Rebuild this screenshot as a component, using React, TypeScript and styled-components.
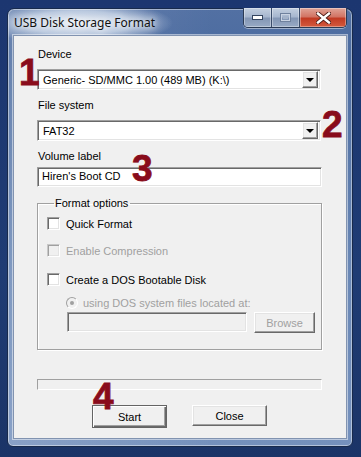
import React from 'react';
import styled, { createGlobalStyle, css } from 'styled-components';

const GlobalStyle = createGlobalStyle`
  html, body {
    margin: 0;
    padding: 0;
    background: #1d3769;
  }
  body {
    width: 361px;
    height: 457px;
    overflow: hidden;
    background: linear-gradient(180deg, #1c3670 0%, #1f3c74 60%, #1b3467 100%);
    font-family: "Liberation Sans", Arial, sans-serif;
  }
`;

const Frame = styled.div`
  position: relative;
  margin: 8px 0 0 7px;
  width: 346px;
  height: 439px;
  box-sizing: border-box;
  border: 1px solid #182a4c;
  border-radius: 7px 7px 6px 6px;
  background:
    radial-gradient(ellipse 95px 22px at 70px 14px, rgba(240, 244, 249, 0.95) 0%, rgba(215, 226, 240, 0.75) 55%, rgba(215, 226, 240, 0) 100%),
    linear-gradient(90deg, rgba(255, 255, 255, 0.15), rgba(255, 255, 255, 0) 60%),
    linear-gradient(180deg, #5270a3 0%, #4c6ca0 10%, #6a88b6 60%, #7591bd 100%);
  box-shadow: inset 0 0 0 1px rgba(255, 255, 255, 0.45);
  display: flex;
  flex-direction: column;
  padding: 0 5px 7px 5px;
`;

const TitleBar = styled.div`
  height: 26px;
  display: flex;
  justify-content: space-between;
  align-items: flex-start;
`;

const Title = styled.span`
  margin: 6px 0 0 1px;
  font-family: "Noto Sans", "Open Sans", sans-serif;
  font-size: 12px;
  line-height: 16px;
  color: #111;
  text-shadow: 0 0 6px #fff, 0 0 10px #fff;
`;

const CaptionGroup = styled.div`
  display: flex;
  margin-top: -1px;
  border: 1px solid #2b3b55;
  border-top: none;
  border-radius: 0 0 5px 5px;
  overflow: hidden;
  box-shadow: 0 1px 0 rgba(255, 255, 255, 0.45);
`;

const CaptionButton = styled.div<{ $w: number; $close?: boolean }>`
  width: ${(p) => p.$w}px;
  height: 19px;
  display: flex;
  align-items: center;
  justify-content: center;
  box-shadow: inset 0 0 0 1px rgba(255, 255, 255, 0.35);
  ${(p) =>
    p.$close
      ? css`
          background: linear-gradient(180deg, #e0a498 0%, #d27565 45%, #c23b24 55%, #d45a3e 100%);
        `
      : css`
          background: linear-gradient(180deg, #c3cfdf 0%, #a7b7cf 45%, #8497b5 55%, #98aac5 100%);
          border-right: 1px solid #3a4c6a;
        `}
`;

const Client = styled.div`
  position: relative;
  flex: 1;
  background: #f0f0f0;
  border: 1px solid #8193b0;
  box-shadow: 0 0 0 1px rgba(255, 255, 255, 0.5);
  padding: 0 0 0 23px;
  display: flex;
  flex-direction: column;
  font-size: 11px;
  color: #000;
`;

const Label = styled.div<{ $top: number }>`
  margin-top: ${(p) => p.$top}px;
  height: 13px;
  line-height: 13px;
  padding-left: 1px;
`;

const sunken = css`
  box-sizing: border-box;
  border-style: solid;
  border-width: 1px;
  border-color: #a0a0a0 #fff #fff #a0a0a0;
  box-shadow: inset 1px 1px 0 #696969, inset -1px -1px 0 #e3e3e3;
`;

const raised = css`
  box-sizing: border-box;
  background: #f0f0f0;
  border-style: solid;
  border-width: 1px;
  border-color: #fff #696969 #696969 #fff;
  box-shadow: inset -1px -1px 0 #a0a0a0, inset 1px 1px 0 #e3e3e3;
`;

const Combo = styled.div<{ $top: number }>`
  ${sunken};
  margin-top: ${(p) => p.$top}px;
  width: 284px;
  height: 21px;
  background: #fff;
  display: flex;
  align-items: center;
  padding: 2px;
`;

const ComboText = styled.span`
  flex: 1;
  padding-left: 3px;
  white-space: nowrap;
`;

const DropButton = styled.div`
  ${raised};
  width: 16px;
  height: 17px;
  display: flex;
  align-items: center;
  justify-content: center;
`;

const Arrow = styled.div`
  width: 0;
  height: 0;
  border-left: 4px solid transparent;
  border-right: 4px solid transparent;
  border-top: 4px solid #000;
  margin-top: 1px;
`;

const TextBox = styled.div<{ $top: number; $width: number; $disabled?: boolean }>`
  ${sunken};
  margin-top: ${(p) => p.$top}px;
  width: ${(p) => p.$width}px;
  height: 20px;
  background: ${(p) => (p.$disabled ? '#f0f0f0' : '#fff')};
  line-height: 16px;
  padding-left: 4px;
`;

const Group = styled.fieldset`
  margin: 10px 0 0 0;
  width: 285px;
  height: 153px;
  box-sizing: border-box;
  border: 1px solid #a0a0a0;
  box-shadow: 1px 1px 0 #fff, inset 1px 1px 0 #fff;
  padding: 0 0 0 9px;
  display: flex;
  flex-direction: column;
`;

const Legend = styled.legend`
  margin-left: 7px;
  padding: 0 2px 0 1px;
  font-size: 11px;
  line-height: 13px;
`;

const CheckRow = styled.div<{ $top: number; $disabled?: boolean }>`
  margin-top: ${(p) => p.$top}px;
  display: flex;
  align-items: center;
  gap: 6px;
  height: 13px;
  color: ${(p) => (p.$disabled ? '#a0a0a0' : '#000')};
`;

const CheckBox = styled.div<{ $disabled?: boolean }>`
  ${sunken};
  width: 13px;
  height: 13px;
  background: ${(p) => (p.$disabled ? '#f0f0f0' : '#fff')};
  ${(p) =>
    p.$disabled &&
    css`
      border-color: #c8c8c8 #fff #fff #c8c8c8;
      box-shadow: inset 1px 1px 0 #a0a0a0, inset -1px -1px 0 #e3e3e3;
    `}
`;

const RadioRow = styled.div`
  margin: 11px 0 0 19px;
  display: flex;
  align-items: center;
  gap: 5px;
  height: 12px;
  color: #a0a0a0;
`;

const Radio = styled.div`
  width: 12px;
  height: 12px;
  box-sizing: border-box;
  border-radius: 50%;
  border: 1px solid #a0a0a0;
  border-right-color: #fff;
  border-bottom-color: #fff;
  background: #f0f0f0;
  display: flex;
  align-items: center;
  justify-content: center;
  &::after {
    content: '';
    width: 4px;
    height: 4px;
    border-radius: 50%;
    background: #a0a0a0;
  }
`;

const PathRow = styled.div`
  margin: 3px 0 0 20px;
  display: flex;
  gap: 7px;
`;

const Button = styled.div<{ $width: number; $default?: boolean; $disabled?: boolean }>`
  ${raised};
  width: ${(p) => p.$width}px;
  height: ${(p) => (p.$default ? 23 : 21)}px;
  display: flex;
  align-items: center;
  justify-content: center;
  color: ${(p) => (p.$disabled ? '#a0a0a0' : '#000')};
  ${(p) =>
    p.$default &&
    css`
      border: 1px solid #646464;
      box-shadow: inset 1px 1px 0 #fff, inset -1px -1px 0 #696969, inset -2px -2px 0 #a0a0a0;
    `}
`;

const Progress = styled.div`
  margin-top: 29px;
  width: 285px;
  height: 11px;
  box-sizing: border-box;
  border: 1px solid;
  border-color: #a0a0a0 #fff #fff #a0a0a0;
  background: #f0f0f0;
`;

const ButtonRow = styled.div`
  margin: 15px 0 0 55px;
  display: flex;
  align-items: flex-start;
  gap: 25px;
`;

const Marker = styled.span<{ $x: number; $y: number }>`
  position: absolute;
  left: ${(p) => p.$x}px;
  top: ${(p) => p.$y}px;
  font-family: "Liberation Sans", Arial, sans-serif;
  font-weight: bold;
  font-size: 37px;
  line-height: 37px;
  color: #890c1b;
  -webkit-text-stroke: 0.8px #890c1b;
`;

const MinimizeIcon = () => (
  <svg width="11" height="5" viewBox="0 0 11 5">
    <rect x="0.5" y="0.5" width="10" height="4" fill="#fff" stroke="#34455f" />
  </svg>
);

const MaximizeIcon = () => (
  <svg width="11" height="9" viewBox="0 0 11 9">
    <rect x="0.5" y="0.5" width="10" height="8" fill="none" stroke="#6f819d" />
    <rect x="1.5" y="1.5" width="8" height="6" fill="none" stroke="#c9d3e2" />
    <rect x="3" y="3" width="5" height="3" fill="#a4b3c9" />
  </svg>
);

const CloseIcon = () => (
  <svg width="15" height="12" viewBox="0 0 15 12">
    <path d="M2 1.5 L13 10.5 M13 1.5 L2 10.5" stroke="#4b1a14" strokeWidth="4.2" strokeLinecap="square" />
    <path d="M2 1.5 L13 10.5 M13 1.5 L2 10.5" stroke="#fff" strokeWidth="2.4" strokeLinecap="square" />
  </svg>
);

export default function App() {
  return (
    <>
      <GlobalStyle />
      <Frame>
        <TitleBar>
          <Title>USB Disk Storage Format</Title>
          <CaptionGroup>
            <CaptionButton $w={27}>
              <MinimizeIcon />
            </CaptionButton>
            <CaptionButton $w={27}>
              <MaximizeIcon />
            </CaptionButton>
            <CaptionButton $w={46} $close>
              <CloseIcon />
            </CaptionButton>
          </CaptionGroup>
        </TitleBar>
        <Client>
          <Label $top={12}>Device</Label>
          <Combo $top={8}>
            <ComboText>Generic- SD/MMC 1.00 (489 MB) (K:\)</ComboText>
            <DropButton>
              <Arrow />
            </DropButton>
          </Combo>
          <Label $top={9}>File system</Label>
          <Combo $top={8}>
            <ComboText>FAT32</ComboText>
            <DropButton>
              <Arrow />
            </DropButton>
          </Combo>
          <Label $top={9}>Volume label</Label>
          <TextBox $top={4} $width={285}>Hiren's Boot CD</TextBox>
          <Group>
            <Legend>Format options</Legend>
            <CheckRow $top={7}>
              <CheckBox />
              Quick Format
            </CheckRow>
            <CheckRow $top={14} $disabled>
              <CheckBox $disabled />
              Enable Compression
            </CheckRow>
            <CheckRow $top={16}>
              <CheckBox />
              Create a DOS Bootable Disk
            </CheckRow>
            <RadioRow>
              <Radio />
              using DOS system files located at:
            </RadioRow>
            <PathRow>
              <TextBox $top={0} $width={180} $disabled />
              <Button $width={61} $disabled>
                Browse
              </Button>
            </PathRow>
          </Group>
          <Progress />
          <ButtonRow>
            <Button $width={75} $default>
              Start
            </Button>
            <Button $width={75}>Close</Button>
          </ButtonRow>
          <Marker $x={5} $y={18}>1</Marker>
          <Marker $x={308} $y={70}>2</Marker>
          <Marker $x={118} $y={114}>3</Marker>
          <Marker $x={79} $y={342}>4</Marker>
        </Client>
      </Frame>
    </>
  );
}
